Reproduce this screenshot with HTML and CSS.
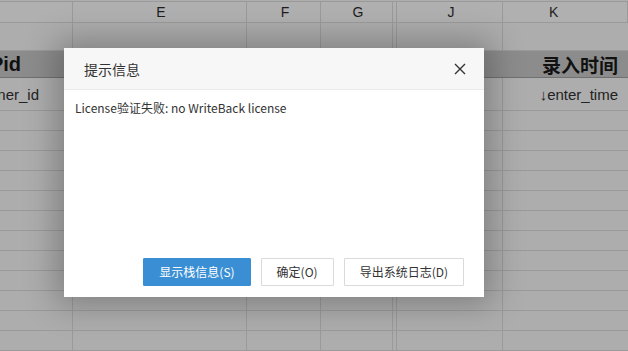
FILE: index.html
```html
<!DOCTYPE html>
<html lang="zh-CN">
<head>
<meta charset="utf-8">
<title>提示信息</title>
<link rel="stylesheet" href="styles.css">
</head>
<body>
<div class="sheet">
  <div class="cell hd"></div>
  <div class="cell hd">E</div>
  <div class="cell hd">F</div>
  <div class="cell hd">G</div>
  <div class="cell hd narrow"></div>
  <div class="cell hd">J</div>
  <div class="cell hd k">K</div>

  <div class="cell"></div><div class="cell"></div><div class="cell"></div><div class="cell"></div><div class="cell narrow"></div><div class="cell"></div><div class="cell last"></div>

  <div class="cell title first">Pid</div>
  <div class="cell title"></div><div class="cell title"></div><div class="cell title"></div><div class="cell title narrow"></div><div class="cell title"></div>
  <div class="cell title last right">录入时间</div>

  <div class="cell field first-field">ner_id</div>
  <div class="cell"></div><div class="cell"></div><div class="cell"></div><div class="cell narrow"></div><div class="cell"></div>
  <div class="cell field last right">↓enter_time</div>
</div>
<div class="rows" id="rows"></div>

<div class="dialog">
  <div class="dlg-head">
    <span class="dlg-title">提示信息</span>
    <svg class="dlg-close" width="12" height="12" viewBox="0 0 12 12"><path d="M1 1L11 11M11 1L1 11" stroke="#333" stroke-width="1.4" fill="none"/></svg>
  </div>
  <div class="dlg-body">License验证失败: no WriteBack license</div>
  <div class="dlg-foot">
    <button class="btn primary">显示栈信息(S)</button>
    <button class="btn">确定(O)</button>
    <button class="btn">导出系统日志(D)</button>
  </div>
</div>
<script>
  var r = document.getElementById('rows');
  var html = '';
  for (var i = 0; i < 12; i++) {
    html += '<div class="cell"></div><div class="cell"></div><div class="cell"></div><div class="cell"></div><div class="cell narrow"></div><div class="cell"></div><div class="cell last"></div>';
  }
  r.innerHTML = html;
</script>
</body>
</html>
```

FILE: styles.css
```css
html, body {
  margin: 0;
  padding: 0;
  width: 628px;
  height: 351px;
  overflow: hidden;
  background: #adadad;
  font-family: "Liberation Sans", "Noto Sans CJK SC", sans-serif;
}
.sheet, .rows {
  display: grid;
  grid-template-columns: 73px 174px 74px 72px 4px 106px 125px;
  width: 628px;
}
.sheet {
  grid-template-rows: 21px 28px 27px 33px;
  border-top: 1px solid #9a9a9a;
  margin-top: 1px;
}
.rows {
  grid-auto-rows: 20px;
}
.cell {
  box-sizing: border-box;
  border-right: 1px solid #9a9a9a;
  border-bottom: 1px solid #9a9a9a;
  background: #adadad;
  min-width: 0;
  overflow: visible;
  white-space: nowrap;
  display: flex;
  align-items: center;
}
.cell.last { border-right: none; }
.hd {
  justify-content: center;
  font-size: 14px;
  color: #1e1e1e;
  padding-left: 3px;
  background: #b0b0b0;
}
.hd.k {
  justify-content: flex-start;
  padding-left: 46px;
}
.title {
  background: #8c8c8c;
  border-bottom-color: #707070;
  border-right: none;
  font-weight: bold;
  font-size: 20px;
  color: #111;
}
.first {
  justify-content: flex-end;
  padding-right: 52px;
  border-right: none;
}
.first-field {
  justify-content: flex-end;
  padding-right: 33px;
}
.right {
  justify-content: flex-end;
  padding-right: 10px;
}
.title.right {
  font-size: 19px;
}
.field {
  font-size: 15px;
  color: #222;
}

.dialog {
  position: absolute;
  left: 64px;
  top: 48px;
  width: 420px;
  height: 249px;
  background: #fff;
  box-shadow: 0 0 30px 8px rgba(0, 0, 0, 0.26);
  display: flex;
  flex-direction: column;
  font-family: "Noto Sans CJK SC", "Open Sans", sans-serif;
}
.dlg-head {
  height: 42px;
  box-sizing: border-box;
  background: #f7f7f7;
  border-bottom: 1px solid #ebebeb;
  display: flex;
  align-items: center;
  justify-content: space-between;
  padding: 0 18px 0 20px;
}
.dlg-title {
  font-size: 14px;
  color: #333;
  line-height: 20px;
}
.dlg-close {
  display: block;
}
.dlg-body {
  flex: 1;
  padding: 9px 11px 0;
  font-size: 12px;
  line-height: 17px;
  color: #333;
}
.dlg-foot {
  display: flex;
  justify-content: flex-end;
  gap: 10px;
  padding: 0 20px 11px;
}
.btn {
  height: 28px;
  box-sizing: border-box;
  padding: 0 15px;
  border: 1px solid #dadada;
  background: #fff;
  color: #333;
  font-family: "Noto Sans CJK SC", "Open Sans", sans-serif;
  font-size: 12px;
  line-height: 26px;
  border-radius: 1px;
}
.btn.primary {
  background: #3a8fd4;
  border-color: #3a8fd4;
  color: #fff;
}
```
